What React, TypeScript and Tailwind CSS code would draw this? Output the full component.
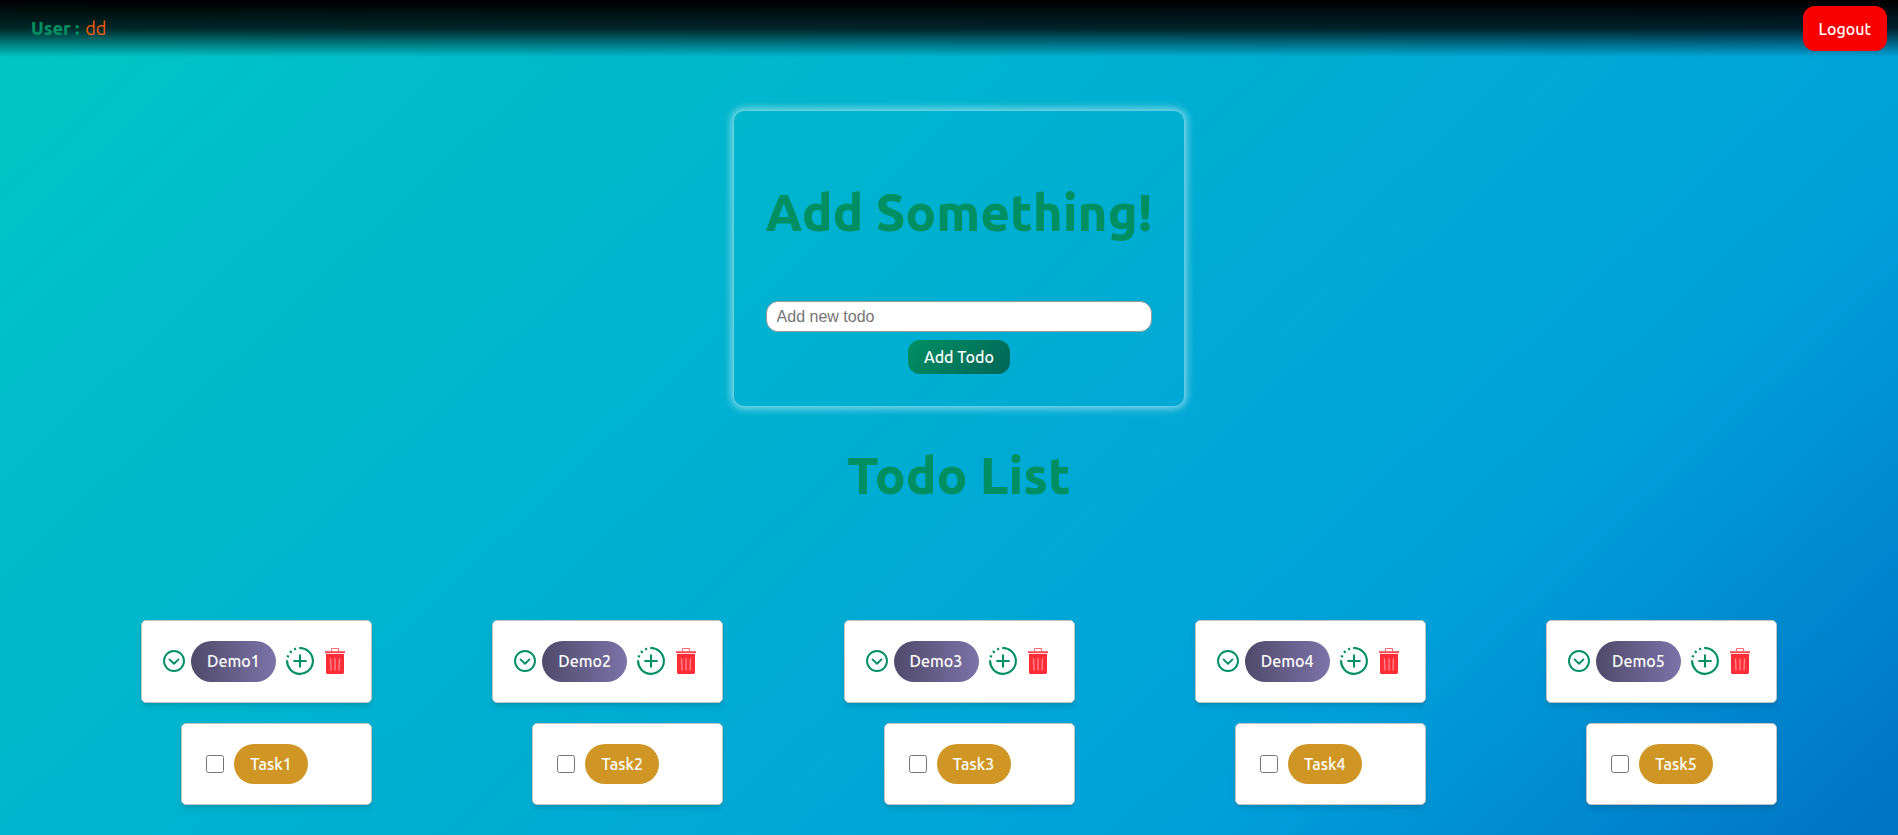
import React from "react";

const items = [1, 2, 3, 4, 5];

function ChevronCircle() {
  return (
    <svg viewBox="0 0 22 22" className="size-[22px]" fill="none" stroke="#008f62" strokeWidth="1.9" strokeLinecap="round" strokeLinejoin="round" aria-hidden="true">
      <circle cx="11" cy="11" r="10" />
      <path d="M6.5 9.4 L11 13.8 L15.5 9.4" />
    </svg>
  );
}

function PlusCircle() {
  return (
    <svg viewBox="0 0 28 28" className="size-7" fill="none" stroke="#008f62" strokeWidth="2.1" aria-hidden="true">
      <path d="M13.2 1.1 A12.9 12.9 0 1 1 1.1 13.2" />
      <path d="M14 7.4 V20.6 M7.4 14 H20.6" />
      <path d="M1.6 10.2 L2.3 8.4 M4 5.6 L5.5 4.1 M8.2 2.5 L10 1.7" strokeWidth="2.4" />
    </svg>
  );
}

function Trash() {
  return (
    <svg viewBox="0 0 20 26" className="h-[26px] w-5" aria-hidden="true">
      <path d="M6.5 3.6 V.5 H13.5 V3.6" fill="none" stroke="#ff6a72" strokeWidth="1" />
      <rect x="0" y="3.2" width="20" height="2" fill="#ff4a52" />
      <path d="M1 6 H19 V24.6 Q19 26 17.6 26 H2.4 Q1 26 1 24.6 Z" fill="#ff2d37" />
      <path d="M5.5 10.5 L6 22.5 M10 10.5 V22.5 M14.5 10.5 L14 22.5" stroke="#ff8a90" strokeWidth="1.3" />
    </svg>
  );
}

export default function App() {
  return (
    <div className="min-h-screen bg-[linear-gradient(137deg,#00c6c4_0%,#00a0da_75%,#0072c4_100%)] font-['Ubuntu','Noto_Sans',sans-serif] text-base">
      <header className="flex h-[57px] items-center justify-between bg-linear-to-b from-black via-black/80 to-transparent pr-[11px] pl-[31px]">
        <p className="flex gap-1.5 pb-px text-lg leading-6 text-[#ff5a00]">
          <span className="font-extrabold text-[#008f62]">User :</span>
          <span>dd</span>
        </p>
        <button className="h-[45px] rounded-xl bg-[#f80000] px-4 font-medium text-white">Logout</button>
      </header>
      <main className="flex flex-col items-center pt-[54px] pl-5">
        <form className="flex flex-col items-center rounded-[10px] px-8 pt-[65px] pb-8 shadow-[0_0_8px_2px_rgba(255,255,255,0.6)]" onSubmit={(e) => e.preventDefault()}>
          <h1 className="text-[51px] leading-[72px] font-extrabold text-[#008f62]">Add Something!</h1>
          <input aria-label="Add new todo" placeholder="Add new todo" className="mt-[53px] h-[31px] w-full rounded-xl border border-[#999] bg-white px-[10px] font-['Liberation_Sans',sans-serif] placeholder:text-[#757575]" />
          <button className="mt-2 h-[34px] rounded-xl bg-[linear-gradient(135deg,#009062,#006658)] px-4 font-medium text-white">Add Todo</button>
        </form>
        <h2 className="mt-[33px] text-[51px] leading-[72px] font-extrabold text-[#008f62]">Todo List</h2>
        <div className="mt-[109px] flex w-full justify-between px-[121px] pb-[29px]">
          {items.map((n) => (
            <section key={n} className="flex w-[231px] flex-col items-end gap-5">
              <div className="flex h-[83px] w-full items-start rounded-[5px] border border-[#c4c4c4] bg-white pt-5 pl-[21px] shadow-md">
                <button aria-label={"Toggle Demo" + n} className="flex h-10 items-center"><ChevronCircle /></button>
                <span className="ml-[6px] flex h-[41px] w-[85px] items-center justify-center rounded-full bg-linear-to-r from-[#504a6b] to-[#7c73a8] pb-px font-medium text-white">Demo{n}</span>
                <button aria-label={"Add task to Demo" + n} className="ml-[10px] flex h-10 items-center"><PlusCircle /></button>
                <button aria-label={"Delete Demo" + n} className="ml-[11px] flex h-10 items-center"><Trash /></button>
              </div>
              <label className="flex h-[82px] w-[191px] items-center gap-[10px] rounded-[5px] border border-[#c4c4c4] bg-white pl-6 shadow-md">
                <input type="checkbox" className="size-[18px]" />
                <span className="flex h-10 w-[74px] items-center justify-center rounded-full bg-[#cf9626] font-medium text-white">Task{n}</span>
              </label>
            </section>
          ))}
        </div>
      </main>
    </div>
  );
}
